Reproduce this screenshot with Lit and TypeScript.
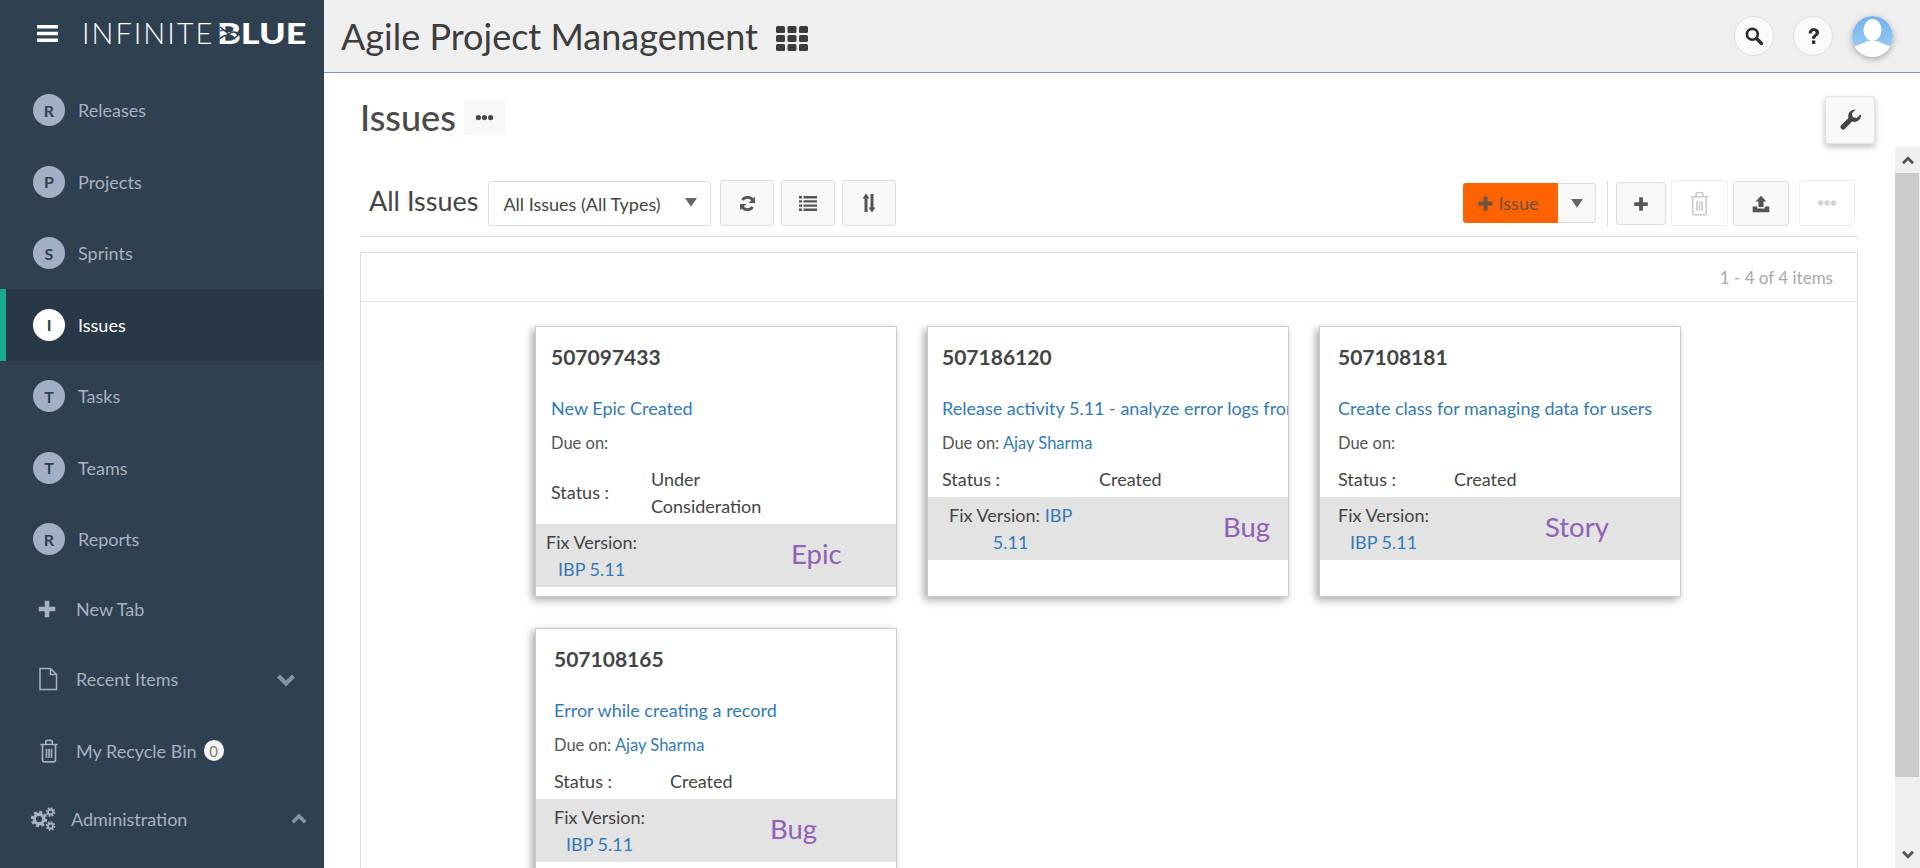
import { LitElement, css, html, svg } from 'lit'
import { customElement } from 'lit/decorators.js'

const icons: Record<string, any> = {
  plus: svg`<path d="M9.500 3h5v6.500H21v5h-6.500V21h-5v-6.500H3v-5h6.500z"/>`,
  file: svg`<path d="M4 1.500h10.500l6 6v15H4z M14.500 1.500v6h6" fill="none" stroke="currentColor" stroke-width="1.500"/>`,
  trash: svg`<path d="M4 6h16 M9 6V3.500q0-1.300 1.300-1.300h3.400Q15 2.200 15 3.500V6 M6 6v14.500q0 1.500 1.500 1.500h9q1.500 0 1.500-1.500V6 M9.700 10v8.500 M12 10v8.500 M14.300 10v8.500" fill="none" stroke="currentColor" stroke-width="1.500"/>`,
  down: svg`<path d="M3 8.500l3-3 6 6 6-6 3 3-9 9z"/>`,
  up: svg`<path d="M3 15.500l3 3 6-6 6 6 3-3-9-9z"/>`,
  search: svg`<circle cx="10" cy="10" r="6.500" fill="none" stroke="currentColor" stroke-width="3.200"/><path d="M15 15l6 6" stroke="currentColor" stroke-width="4" stroke-linecap="round"/>`,
  question: svg`<path d="M6.500 8.500C6.500 4.800 9 2.500 12.500 2.500c3.300 0 5.800 2 5.800 5 0 2.600-1.600 3.600-3 4.600-1 .7-1.300 1.200-1.300 2.400h-3.700c0-2.300.7-3.400 2.200-4.500 1.200-.8 2-1.400 2-2.400 0-1-.9-1.800-2.100-1.800-1.300 0-2.200.8-2.400 2.700z"/><rect x="10.300" y="16.500" width="3.700" height="4"/>`,
  refresh: svg`<path d="M19.500 9.500A8 8 0 0 0 5.500 7.500" fill="none" stroke="currentColor" stroke-width="3.400"/><path d="M21.500 3.500v8h-8z"/><path d="M4.500 14.500A8 8 0 0 0 18.500 16.500" fill="none" stroke="currentColor" stroke-width="3.400"/><path d="M2.500 20.500v-8h8z"/>`,
  list: svg`<path d="M3 5h3v2.400H3z M7.500 5H21v2.400H7.500z M3 9.200h3v2.400H3z M7.500 9.200H21v2.400H7.500z M3 13.400h3v2.400H3z M7.500 13.400H21v2.400H7.500z M3 17.600h3V20H3z M7.500 17.600H21V20H7.500z"/>`,
  sort: svg`<path d="M9 2.500l3.500 5h-2V21h-3V7.500h-2z M15 21.500l-3.500-5h2V3h3v13.500h2z"/>`,
  dots: svg`<circle cx="5" cy="12" r="3"/><circle cx="12" cy="12" r="3"/><circle cx="19" cy="12" r="3"/>`,
  caret: svg`<path d="M3 6h18l-9 13z"/>`,
  upload: svg`<path d="M12 2l6.500 7H15v6.500H9V9H5.500z"/><path d="M2 15h5.500v2.500h9V15H22v7H2z"/>`,
  wrench: svg`<path d="M23 6.500a7 7 0 0 1-9.300 6.600L6 20.800a2.700 2.700 0 0 1-3.800-3.800l7.700-7.700A7 7 0 0 1 17.500 0.500l-4 4 .8 4.200 4.200.8 4-4c.3.600.5 1.300.5 2z"/>`,
}

const icon = (name: string, size: number, box = 24) =>
  html`<svg width=${size} height=${size} viewBox="0 0 ${box} ${box}" fill="currentColor">${icons[name]}</svg>`

const navItems = [
  { letter: 'R', label: 'Releases' },
  { letter: 'P', label: 'Projects' },
  { letter: 'S', label: 'Sprints' },
  { letter: 'I', label: 'Issues', active: true },
  { letter: 'T', label: 'Tasks' },
  { letter: 'T', label: 'Teams' },
  { letter: 'R', label: 'Reports' },
]

const cards = [
  { id: '507097433', title: 'New Epic Created', due: '', status: 'Under Consideration', fix: ['Fix Version:', 'IBP 5.11'], type: 'Epic', pad: 15, statusAt: 115, fixAt: 10, typeAt: 255 },
  { id: '507186120', title: 'Release activity 5.11 - analyze error logs from', due: 'Ajay Sharma', status: 'Created', fix: ['Fix Version: IBP', '5.11'], type: 'Bug', pad: 14, statusAt: 171, fixAt: 21, typeAt: 295 },
  { id: '507108181', title: 'Create class for managing data for users', due: '', status: 'Created', fix: ['Fix Version:', 'IBP 5.11'], type: 'Story', pad: 18, statusAt: 134, fixAt: 18, typeAt: 225 },
  { id: '507108165', title: 'Error while creating a record', due: 'Ajay Sharma', status: 'Created', fix: ['Fix Version:', 'IBP 5.11'], type: 'Bug', pad: 18, statusAt: 134, fixAt: 18, typeAt: 234 },
]

@customElement('app-root')
export class AppRoot extends LitElement {
  renderNav() {
    return navItems.map(
      (n) => html`
        <div class="row ${n.active ? 'active' : ''}">
          <span class="circle">${n.letter}</span>
          <span>${n.label}</span>
        </div>
      `
    )
  }

  renderCard(c: (typeof cards)[number]) {
    return html`
      <div class="card">
        <div class="card-id" style="padding-left:${c.pad}px">${c.id}</div>
        <div class="card-title" style="padding-left:${c.pad}px"><a>${c.title}</a></div>
        <div class="card-due" style="padding-left:${c.pad}px">Due on: ${c.due ? html`<a>${c.due}</a>` : ''}</div>
        <div class="card-status" style="padding-left:${c.pad}px">
          <span style="width:${c.statusAt - c.pad}px">Status :</span>
          <span class="status-value">${c.status}</span>
        </div>
        <div class="band">
          <div class="fix" style="margin-left:${c.fixAt}px">
            ${c.fix[0].endsWith('IBP') ? html`Fix Version: <a>IBP</a>` : c.fix[0]}<br /><a>${c.fix[1]}</a>
          </div>
          <div class="type" style="left:${c.typeAt}px">${c.type}</div>
        </div>
      </div>
    `
  }

  render() {
    return html`
      <aside class="side">
        <div class="brand">
          <svg class="burger" width="21" height="17" viewBox="0 0 21 17" fill="#fff">
            <path d="M0 0h21v3.500H0z M0 6.800h21v3.500H0z M0 13.500h21V17H0z" />
          </svg>
          <div class="logo">
            <span class="logo-thin">INFINITE</span>
            <span class="logo-bold">
              BLUE
              <svg class="knot" width="22" height="22" viewBox="0 0 22 22" fill="none" stroke="#2f4050" stroke-width="1.600">
                <path d="M3 3l14 14 M3 17c0-4 5-3 8-6s7-3 8 0-3 6-7 3 M3 8c2-3 5-1 7 1" />
              </svg>
            </span>
          </div>
        </div>
        <nav class="nav">
          ${this.renderNav()}
          <div class="row tool new-tab">
            <span class="tool-icon">${icon('plus', 22)}</span>
            <span>New Tab</span>
          </div>
          <div class="row tool recent">
            <span class="tool-icon">${icon('file', 24)}</span>
            <span>Recent Items</span>
            <span class="chev">${icon('down', 24)}</span>
          </div>
          <div class="row tool bin">
            <span class="tool-icon">${icon('trash', 26)}</span>
            <span>My Recycle Bin</span>
            <span class="count">0</span>
          </div>
          <div class="row tool admin">
            <svg class="gears" width="26" height="24" viewBox="0 0 26 24" fill="none" stroke="#a7b1c2">
              <circle cx="9" cy="12" r="4.800" stroke-width="3.400" />
              <circle cx="9" cy="12" r="7" stroke-width="2.600" stroke-dasharray="3 2.500" />
              <circle cx="20.500" cy="5" r="2.500" stroke-width="1.800" />
              <circle cx="20.500" cy="5" r="4" stroke-width="1.600" stroke-dasharray="1.800 1.300" />
              <circle cx="20.500" cy="19" r="2.500" stroke-width="1.800" />
              <circle cx="20.500" cy="19" r="4" stroke-width="1.600" stroke-dasharray="1.800 1.300" />
            </svg>
            <span>Administration</span>
            <span class="chev up">${icon('up', 20)}</span>
          </div>
        </nav>
      </aside>

      <main class="main">
        <header class="top">
          <h1>Agile Project Management</h1>
          <svg class="apps" width="32" height="25" viewBox="0 0 32 25" fill="#3b3b3b">
            <rect width="9" height="7" rx="1.500" />
            <rect x="11.500" width="9" height="7" rx="1.500" />
            <rect x="23" width="9" height="7" rx="1.500" />
            <rect y="9" width="9" height="7" rx="1.500" />
            <rect x="11.500" y="9" width="9" height="7" rx="1.500" />
            <rect x="23" y="9" width="9" height="7" rx="1.500" />
            <rect y="18" width="9" height="7" rx="1.500" />
            <rect x="11.500" y="18" width="9" height="7" rx="1.500" />
            <rect x="23" y="18" width="9" height="7" rx="1.500" />
          </svg>
          <span class="spacer"></span>
          <button class="round">${icon('search', 20)}</button>
          <button class="round help">${icon('question', 21)}</button>
          <svg class="avatar" width="41" height="41" viewBox="0 0 41 41">
            <defs>
              <linearGradient id="sky" x1="0" y1="0" x2="0" y2="1">
                <stop offset="0" stop-color="#70b2ec" />
                <stop offset="1" stop-color="#a4cff2" />
              </linearGradient>
              <clipPath id="disc"><circle cx="20.500" cy="20.500" r="20.500" /></clipPath>
            </defs>
            <g clip-path="url(#disc)">
              <rect width="41" height="41" fill="url(#sky)" />
              <ellipse cx="20.500" cy="14" rx="9" ry="11" fill="#fff" />
              <path d="M0 41V33q2-3 9-5l7-3h9l7 3q7 2 9 5v8z" fill="#fff" />
            </g>
          </svg>
        </header>

        <div class="page-head">
          <div class="page-title">
            <h2>Issues</h2>
            <span class="more">${icon('dots', 21)}</span>
          </div>
          <button class="wrench">${icon('wrench', 23)}</button>
        </div>

        <div class="body">
          <div class="content">
            <div class="toolbar">
              <span class="view-name">All Issues</span>
              <div class="select">
                <span>All Issues (All Types)</span>
                <span class="select-caret">${icon('caret', 16)}</span>
              </div>
              <button class="btn w54">${icon('refresh', 19)}</button>
              <button class="btn w54">${icon('list', 24)}</button>
              <button class="btn w54">${icon('sort', 24)}</button>
              <span class="spacer"></span>
              <button class="add-issue">${icon('plus', 19)}<span>Issue</span></button>
              <button class="add-caret">${icon('caret', 16)}</button>
              <span class="sep"></span>
              <button class="btn small plus">${icon('plus', 18)}</button>
              <button class="btn off trash">${icon('trash', 27)}</button>
              <button class="btn up-btn">${icon('upload', 20)}</button>
              <button class="btn off dots">${icon('dots', 22)}</button>
            </div>
            <section class="panel">
              <div class="panel-head">1 - 4 of 4 items</div>
              <div class="cards">${cards.map((c) => this.renderCard(c))}</div>
            </section>
          </div>
          <div class="scrollbar">
            <span class="arrow">${icon('up', 16)}</span>
            <span class="thumb"></span>
            <span class="spacer"></span>
            <span class="arrow">${icon('down', 16)}</span>
          </div>
        </div>
      </main>
    `
  }

  static styles = css`
    :host {
      display: flex;
      width: 100%;
      height: 100vh;
      overflow: hidden;
      font-family: Lato, 'Liberation Sans', sans-serif;
      color: #444;
      background: #fff;
    }
    button {
      font: inherit;
      color: inherit;
      padding: 0;
      display: inline-flex;
      align-items: center;
      justify-content: center;
    }
    a {
      color: #337ab7;
    }
    .spacer {
      flex: 1;
    }

    .side {
      width: 324px;
      flex: none;
      background: #2f4050;
      color: #a7b1c2;
      font-size: 18px;
    }
    .brand {
      height: 72px;
      border-bottom: 1px solid #2d4152;
      display: flex;
      align-items: center;
      padding-left: 37px;
      color: #fff;
    }
    .burger {
      margin-top: -6px;
    }
    .logo {
      display: flex;
      align-items: center;
      margin: -8px 0 0 24px;
      font-size: 29px;
      line-height: 1;
    }
    .logo-thin {
      font-weight: 300;
      letter-spacing: 2px;
    }
    .logo-bold {
      position: relative;
      margin-left: 3px;
      font-weight: 900;
      display: inline-block;
      transform: scaleX(1.24);
      transform-origin: left center;
    }
    .knot {
      position: absolute;
      left: 0;
      top: 5px;
      width: 19px;
    }
    .nav {
      padding-top: 1.5px;
    }
    .row {
      height: 71.5px;
      display: flex;
      align-items: center;
      padding-left: 33px;
      box-sizing: border-box;
    }
    .row.active {
      background: #293846;
      color: #fff;
      box-shadow: inset 6px 0 0 #19aa8d;
    }
    .circle {
      width: 32px;
      height: 32px;
      border-radius: 50%;
      flex: none;
      margin-right: 13px;
      background: #a3afc4;
      color: #2f4050;
      font-weight: 700;
      font-size: 16px;
      display: flex;
      align-items: center;
      justify-content: center;
    }
    .active .circle {
      background: #fff;
    }
    .tool {
      padding-left: 37px;
    }
    .tool-icon {
      width: 40px;
      display: inline-flex;
      align-items: center;
      flex: none;
      margin-left: -1px;
    }
    .new-tab {
      height: 69px;
      border-bottom: 1px solid #2d4152;
    }
    .recent {
      height: 72px;
      padding-bottom: 2px;
      border-bottom: 1px solid #2d4152;
      position: relative;
    }
    .bin {
      height: 69px;
    }
    .admin {
      height: 71px;
      padding: 0 0 3px 30px;
      position: relative;
    }
    .gears {
      margin-right: 15px;
      flex: none;
    }
    .chev {
      position: absolute;
      right: 26px;
      top: 25px;
      color: #8593a6;
    }
    .chev.up {
      right: 15px;
      top: 23px;
    }
    .count {
      margin-left: 7px;
      width: 20px;
      height: 21px;
      border-radius: 10px;
      background: #f4f4f4;
      color: #7d7d6d;
      font-size: 15px;
      display: flex;
      align-items: center;
      justify-content: center;
    }

    .main {
      flex: 1;
      min-width: 0;
      display: flex;
      flex-direction: column;
    }
    .top {
      height: 72px;
      flex: none;
      display: flex;
      align-items: center;
      background: #efefef;
      border-bottom: 1px solid #6f98cb;
      padding: 0 27px 0 17px;
    }
    h1 {
      margin: 0 0 1px;
      font-size: 36px;
      font-weight: 400;
      color: #3d3d3d;
      line-height: 1;
    }
    .apps {
      margin: 4px 0 0 18px;
    }
    .round {
      width: 40px;
      height: 40px;
      border-radius: 50%;
      border: 1px solid #dedede;
      background: #fafafa;
      color: #2d2d2d;
      margin-right: 19px;
    }
    .avatar {
      border-radius: 50%;
      box-shadow: 0 2px 6px rgba(0, 0, 0, 0.3);
    }

    .page-head {
      height: 74px;
      flex: none;
      display: flex;
      padding: 0 45px 0 36px;
      justify-content: space-between;
      box-sizing: border-box;
    }
    .page-title {
      display: flex;
      align-items: center;
      height: 88px;
    }
    h2 {
      margin: 0;
      font-size: 36px;
      font-weight: 500;
      color: #4a4a4a;
      line-height: 1;
    }
    .more {
      margin-left: 8px;
      width: 42px;
      height: 35px;
      border-radius: 3px;
      background: #f8f8f8;
      display: flex;
      align-items: center;
      justify-content: center;
      color: #4a4a4a;
    }
    .wrench {
      width: 50px;
      height: 48px;
      margin-top: 23px;
      border: 1px solid #e2e2e2;
      border-radius: 3px;
      background: #f8f8f8;
      color: #444;
      box-shadow: 0 3px 6px rgba(0, 0, 0, 0.25);
    }

    .body {
      flex: 1;
      min-height: 0;
      display: flex;
    }
    .content {
      flex: 1;
      min-width: 0;
      padding: 33px 37px 0 36px;
      display: flex;
      flex-direction: column;
    }
    .toolbar {
      height: 57px;
      flex: none;
      display: flex;
      align-items: flex-start;
      border-bottom: 1px solid #ddd;
      box-sizing: border-box;
    }
    .view-name {
      margin: 4px 10px 0 9px;
      font-size: 27px;
      line-height: 34px;
      color: #444;
    }
    .select {
      width: 223px;
      height: 45px;
      margin-top: 1px;
      box-sizing: border-box;
      border: 1px solid #ddd;
      border-radius: 3px;
      display: flex;
      align-items: center;
      justify-content: space-between;
      padding: 0 11px 0 14px;
      font-size: 18px;
    }
    .select-caret {
      display: flex;
      color: #666;
      margin-top: -3px;
    }
    .btn {
      height: 46px;
      box-sizing: border-box;
      border: 1px solid #ddd;
      border-radius: 3px;
      background: #f8f8f8;
      color: #555;
    }
    .w54 {
      width: 54px;
      margin-right: 7px;
    }
    .select + .w54 {
      margin-left: 9px;
    }
    .add-issue {
      width: 95px;
      height: 40px;
      margin-top: 3px;
      border: none;
      border-radius: 3px 0 0 3px;
      background: #ff6200;
      color: #6e5240;
      font-size: 18px;
      gap: 4px;
      padding-right: 7px;
    }
    .add-caret {
      width: 38px;
      height: 40px;
      margin-top: 3px;
      box-sizing: border-box;
      border: 1px solid #ddd;
      border-left: none;
      border-radius: 0 3px 3px 0;
      background: #f8f8f8;
      color: #666;
    }
    .sep {
      width: 1px;
      height: 45px;
      margin: 1px 8px 0 11px;
      background: #ddd;
    }
    .plus {
      width: 50px;
      height: 43px;
      margin: 2px 5px 0 0;
    }
    .trash {
      width: 57px;
      margin-right: 5px;
    }
    .up-btn {
      width: 56px;
      height: 45px;
      margin: 1px 10px 0 0;
    }
    .dots {
      width: 56px;
      margin-right: 3px;
    }
    .btn.off {
      background: #fff;
      border-color: #eee;
      color: #d4d4d4;
    }
    .trash.off {
      color: #ccc;
    }

    .panel {
      flex: 1;
      margin-top: 15px;
      border: 1px solid #ddd;
      border-bottom: none;
      min-height: 0;
    }
    .panel-head {
      height: 48px;
      border-bottom: 1px solid #e2e2e2;
      display: flex;
      align-items: center;
      justify-content: flex-end;
      padding-right: 24px;
      font-size: 17px;
      color: #a9a9a9;
    }
    .cards {
      display: grid;
      grid-template-columns: repeat(3, 362px);
      justify-content: center;
      gap: 31px 30px;
      padding: 24px 2px 0 0;
    }
    .card {
      height: 271px;
      box-sizing: border-box;
      border: 1px solid #ccc;
      background: #fff;
      overflow: hidden;
      box-shadow: -3px 3px 8px rgba(0, 0, 0, 0.35);
      font-size: 18px;
    }
    .card-id {
      height: 62px;
      padding-bottom: 4px;
      box-sizing: border-box;
      display: flex;
      align-items: center;
      font-size: 21px;
      font-weight: 700;
      color: #444;
    }
    .card-title {
      height: 36px;
      line-height: 38px;
      white-space: nowrap;
    }
    .card-due {
      height: 36px;
      line-height: 36px;
      font-size: 16.500px;
      color: #555;
    }
    .card-status {
      display: flex;
      align-items: center;
      padding: 4.500px 0;
      line-height: 27px;
    }
    .card-status span:first-child {
      flex: none;
    }
    .status-value {
      max-width: 130px;
    }
    .band {
      position: relative;
      height: 63px;
      padding: 4.500px 0;
      box-sizing: border-box;
      background: #e3e3e3;
      line-height: 27px;
    }
    .fix {
      width: fit-content;
      text-align: center;
      white-space: nowrap;
    }
    .type {
      position: absolute;
      top: 13px;
      font-size: 27.500px;
      line-height: 34px;
      color: #9161b5;
    }

    .scrollbar {
      width: 25px;
      flex: none;
      background: #efefef;
      display: flex;
      flex-direction: column;
      color: #555;
    }
    .arrow {
      height: 26px;
      display: flex;
      align-items: center;
      justify-content: center;
      flex: none;
    }
    .thumb {
      height: 604px;
      flex: none;
      width: 24px;
      background: #ccc;
    }
  `
}
